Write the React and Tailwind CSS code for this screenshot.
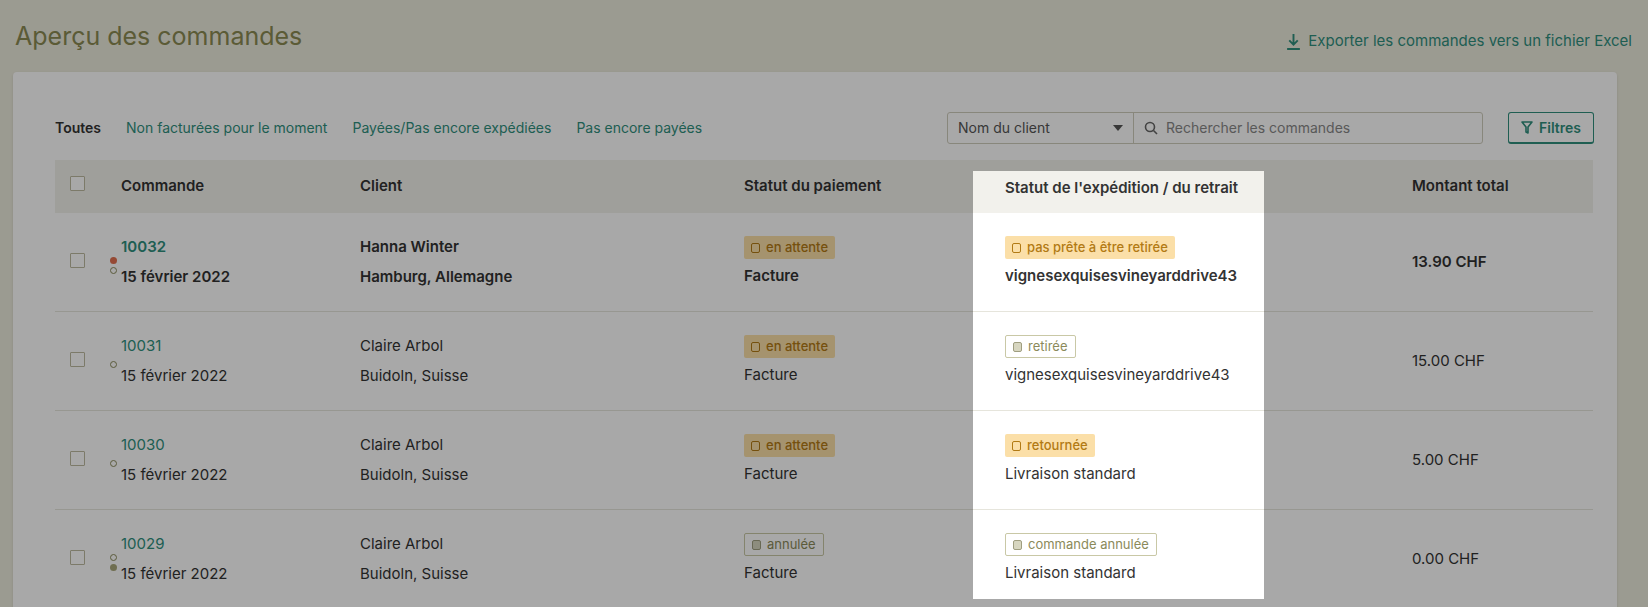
import React from "react";

const F = { fontFamily: "Inter, 'Noto Sans', sans-serif" };

function Box() {
  return <span className="inline-block w-[15px] h-[15px] border border-[#bdb9a0] bg-white rounded-[1px]" />;
}

function Badge({ kind, children }) {
  if (kind === "warn")
    return (
      <span className="inline-flex items-center gap-[6px] h-[23px] px-[7px] rounded-[2px] bg-[#fbdfa8] text-[#b27a14] text-[13px] font-medium">
        <span className="w-[9px] h-[10px] border border-[#b27a14] rounded-[2px]" />
        {children}
      </span>
    );
  return (
    <span className="inline-flex items-center gap-[6px] h-[23px] px-[7px] rounded-[2px] bg-white border border-[#c9c8a6] text-[#8b8a5a] text-[13px]">
      <span className="w-[9px] h-[10px] border border-[#9f9e80] bg-[#d7d6c0] rounded-[2px]" />
      {children}
    </span>
  );
}

const rows = [
  { id: "10032", bold: true, name: "Hanna Winter", loc: "Hamburg, Allemagne", pay: ["warn", "en attente"], ship: ["warn", "pas prête à être retirée"], method: "vignesexquisesvineyarddrive43", amt: "13.90 CHF", dots: ["red", "ring"] },
  { id: "10031", name: "Claire Arbol", loc: "Buidoln, Suisse", pay: ["warn", "en attente"], ship: ["neutral", "retirée"], method: "vignesexquisesvineyarddrive43", amt: "15.00 CHF", dots: ["ring"] },
  { id: "10030", name: "Claire Arbol", loc: "Buidoln, Suisse", pay: ["warn", "en attente"], ship: ["warn", "retournée"], method: "Livraison standard", amt: "5.00 CHF", dots: ["ring"] },
  { id: "10029", name: "Claire Arbol", loc: "Buidoln, Suisse", pay: ["neutral", "annulée"], ship: ["neutral", "commande annulée"], method: "Livraison standard", amt: "0.00 CHF", dots: ["ring", "olive"] },
];

const cols = "grid grid-cols-[50px_239px_384px_245px_291px_132px_197px]";

function Dot({ t }) {
  if (t === "red") return <span className="w-[7px] h-[7px] rounded-full bg-[#e2704f]" />;
  if (t === "olive") return <span className="w-[7px] h-[7px] rounded-full bg-[#a9a77a]" />;
  return <span className="w-[7px] h-[7px] rounded-full border border-[#8b8a5a]" />;
}

export default function App() {
  return (
    <div style={F} className="relative w-[1648px] h-[607px] overflow-hidden bg-[#ecebdd] text-[#333] text-[15px]">
      <div className="flex items-start justify-between pl-[15px] pr-[16px] pt-[19px]">
        <h1 className="text-[25px] text-[#8a8a52] leading-[34px]">Aperçu des commandes</h1>
        <a className="flex items-center gap-[7px] mt-[11px] text-[#2f8f7d] text-[15px]">
          <svg width="15" height="17" viewBox="0 0 14 16" fill="none" stroke="#2f8f7d" strokeWidth="1.8"><path d="M7 1v10M3 7l4 4 4-4M1 15h12" /></svg>
          Exporter les commandes vers un fichier Excel
        </a>
      </div>
      <div className="mx-[13px] mt-[19px] w-[1604px] h-[620px] bg-white rounded-[4px] shadow-sm pl-[42px] pt-[39px]">
        <div className="flex items-center h-[33px] w-[1539px]">
          <span className="font-semibold text-[14px]">Toutes</span>
          <span className="ml-[25px] text-[#2f8f7d] text-[14px]">Non facturées pour le moment</span>
          <span className="ml-[25px] text-[#2f8f7d] text-[14px]">Payées/Pas encore expédiées</span>
          <span className="ml-[25px] text-[#2f8f7d] text-[14px]">Pas encore payées</span>
          <div className="ml-auto flex h-[32px] border border-[#cfcdbd] rounded-[3px] w-[536px]">
            <div className="w-[186px] flex items-center justify-between px-[10px] border-r border-[#cfcdbd] text-[#555] text-[14px]">
              Nom du client
              <span className="w-0 h-0 border-l-[5px] border-r-[5px] border-t-[6px] border-l-transparent border-r-transparent border-t-[#555]" />
            </div>
            <div className="flex items-center gap-[8px] px-[10px] text-[#888] text-[14px]">
              <svg width="14" height="14" viewBox="0 0 14 14" fill="none" stroke="#666" strokeWidth="1.6"><circle cx="6" cy="6" r="4.5" /><path d="M9.5 9.5l3.5 3.5" /></svg>
              Rechercher les commandes
            </div>
          </div>
          <button className="ml-[25px] h-[32px] px-[12px] flex items-center gap-[6px] border border-[#2f8f7d] border-b-2 rounded-[3px] text-[#2f8f7d] font-semibold text-[14px]">
            <svg width="12" height="13" viewBox="0 0 12 13" fill="none" stroke="#2f8f7d" strokeWidth="1.6" strokeLinejoin="round"><path d="M1 1h10L7 6v6L5 11V6z" /></svg>
            Filtres
          </button>
        </div>
        <div className="mt-[16px] w-[1538px]">
          <div className={`${cols} h-[53px] bg-[#f2f1ec] items-center font-semibold`}>
            <div className="pl-[15px]"><Box /></div>
            <div className="pl-[16px]">Commande</div>
            <div className="pl-[16px]">Client</div>
            <div className="pl-[16px]">Statut du paiement</div>
            <div className="pl-[32px] pt-[4px]">Statut de l'expédition / du retrait</div>
            <div />
            <div className="pl-[16px]">Montant total</div>
          </div>
          {rows.map((r) => (
            <div key={r.id} className={`${cols} h-[99px] items-center border-b border-[#e6e5dc] ${r.bold ? "font-semibold" : ""}`}>
              <div className="pl-[15px] pt-[2px]"><Box /></div>
              <div className="flex items-center">
                <div className="w-[16px] flex flex-col items-center gap-[3px] pt-[6px]">
                  {r.dots.map((d, k) => <Dot key={k} t={d} />)}
                </div>
                <div className="flex flex-col gap-[7px]">
                  <span className="text-[#2f8f7d]">{r.id}</span>
                  <span>15 février 2022</span>
                </div>
              </div>
              <div className="pl-[16px] flex flex-col gap-[7px]"><span>{r.name}</span><span>{r.loc}</span></div>
              <div className="pl-[16px] flex flex-col items-start gap-[6px] font-normal">
                <Badge kind={r.pay[0]}>{r.pay[1]}</Badge>
                <span className={r.bold ? "font-semibold" : ""}>Facture</span>
              </div>
              <div className="pl-[32px] flex flex-col items-start gap-[6px] font-normal">
                <Badge kind={r.ship[0]}>{r.ship[1]}</Badge>
                <span className={r.bold ? "font-semibold" : ""}>{r.method}</span>
              </div>
              <div />
              <div className="pl-[16px]">{r.amt}</div>
            </div>
          ))}
        </div>
      </div>
      <div className="absolute left-[973px] top-[171px] w-[291px] h-[428px] shadow-[0_0_0_3000px_rgba(0,0,0,0.34)] pointer-events-none" />
    </div>
  );
}
